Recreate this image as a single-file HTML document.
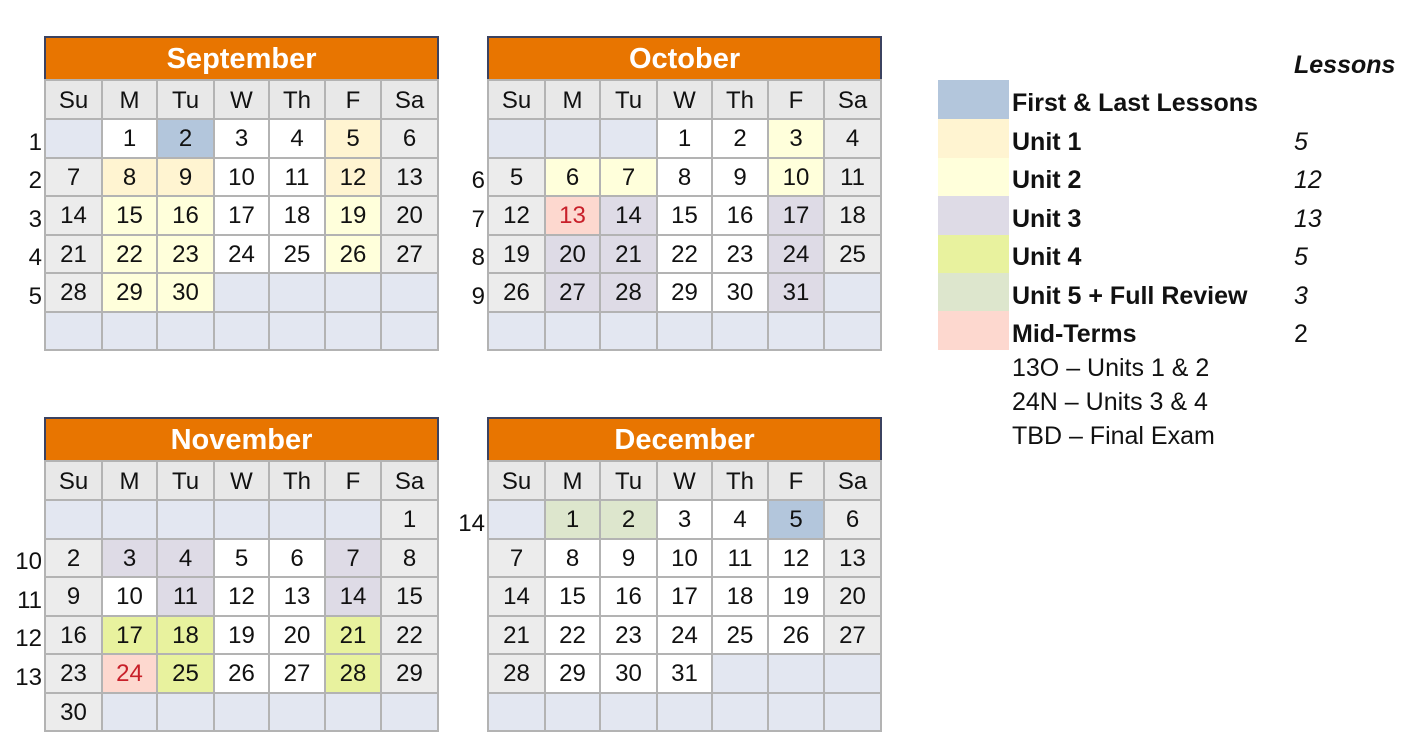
<!DOCTYPE html>
<html><head><meta charset="utf-8"><style>
body{margin:0;width:1422px;height:750px;background:#fff;position:relative;font-family:"Liberation Sans",sans-serif;color:#111;overflow:hidden}
table.cal{position:absolute;border-collapse:collapse;table-layout:fixed;width:393px;border-left:2px solid #3b4260;border-bottom:2px solid #3b4260}
table.cal td{border:2px solid #b3b3b3;text-align:center;font-size:24px;padding:2px 0 0 0;height:34.5px;line-height:24px}
table.cal tr.h td{background:#e87500;color:#fff;font-weight:bold;font-size:29px;height:40px;padding:1px 0 0 0;border:2px solid #3b4260;border-bottom-color:#b3b3b3}
table.cal tr.d td{background:#e8e8e8;height:35px}
td.e{background:#e3e7f1}td.w{background:#fff}td.g{background:#ececec}
td.f{background:#b3c6dc}td.a{background:#fff4d1}td.b{background:#ffffdb}td.c{background:#dedbe6}td.u4{background:#e8f29e}td.u5{background:#dde6cd}td.m{background:#fdd8cf;color:#c8202a}
.wk{position:absolute;font-size:24px;width:40px;text-align:right}
.sw{position:absolute;left:938px;width:71px;height:39px}
.lt{position:absolute;left:1012px;font-size:25px;font-weight:bold;line-height:28px}
.ln{position:absolute;left:1294px;font-size:25px;font-style:italic;line-height:28px}
.pl{position:absolute;left:1012px;font-size:25px;line-height:28px}
</style></head><body>

<table class="cal" style="left:44px;top:36px">
<colgroup><col style="width:57px"><col style="width:55px"><col style="width:57px"><col style="width:55px"><col style="width:56px"><col style="width:56px"><col style="width:57px"></colgroup>
<tr class="h"><td colspan="7">September</td></tr>
<tr class="d"><td>Su</td><td>M</td><td>Tu</td><td>W</td><td>Th</td><td>F</td><td>Sa</td></tr>
<tr><td class="e"></td><td class="w">1</td><td class="f">2</td><td class="w">3</td><td class="w">4</td><td class="a">5</td><td class="g">6</td></tr>
<tr><td class="g">7</td><td class="a">8</td><td class="a">9</td><td class="w">10</td><td class="w">11</td><td class="a">12</td><td class="g">13</td></tr>
<tr><td class="g">14</td><td class="b">15</td><td class="b">16</td><td class="w">17</td><td class="w">18</td><td class="b">19</td><td class="g">20</td></tr>
<tr><td class="g">21</td><td class="b">22</td><td class="b">23</td><td class="w">24</td><td class="w">25</td><td class="b">26</td><td class="g">27</td></tr>
<tr><td class="g">28</td><td class="b">29</td><td class="b">30</td><td class="e"></td><td class="e"></td><td class="e"></td><td class="e"></td></tr>
<tr><td class="e"></td><td class="e"></td><td class="e"></td><td class="e"></td><td class="e"></td><td class="e"></td><td class="e"></td></tr>
</table>

<table class="cal" style="left:487px;top:36px">
<colgroup><col style="width:57px"><col style="width:55px"><col style="width:57px"><col style="width:55px"><col style="width:56px"><col style="width:56px"><col style="width:57px"></colgroup>
<tr class="h"><td colspan="7">October</td></tr>
<tr class="d"><td>Su</td><td>M</td><td>Tu</td><td>W</td><td>Th</td><td>F</td><td>Sa</td></tr>
<tr><td class="e"></td><td class="e"></td><td class="e"></td><td class="w">1</td><td class="w">2</td><td class="b">3</td><td class="g">4</td></tr>
<tr><td class="g">5</td><td class="b">6</td><td class="b">7</td><td class="w">8</td><td class="w">9</td><td class="b">10</td><td class="g">11</td></tr>
<tr><td class="g">12</td><td class="m">13</td><td class="c">14</td><td class="w">15</td><td class="w">16</td><td class="c">17</td><td class="g">18</td></tr>
<tr><td class="g">19</td><td class="c">20</td><td class="c">21</td><td class="w">22</td><td class="w">23</td><td class="c">24</td><td class="g">25</td></tr>
<tr><td class="g">26</td><td class="c">27</td><td class="c">28</td><td class="w">29</td><td class="w">30</td><td class="c">31</td><td class="e"></td></tr>
<tr><td class="e"></td><td class="e"></td><td class="e"></td><td class="e"></td><td class="e"></td><td class="e"></td><td class="e"></td></tr>
</table>

<table class="cal" style="left:44px;top:417px">
<colgroup><col style="width:57px"><col style="width:55px"><col style="width:57px"><col style="width:55px"><col style="width:56px"><col style="width:56px"><col style="width:57px"></colgroup>
<tr class="h"><td colspan="7">November</td></tr>
<tr class="d"><td>Su</td><td>M</td><td>Tu</td><td>W</td><td>Th</td><td>F</td><td>Sa</td></tr>
<tr><td class="e"></td><td class="e"></td><td class="e"></td><td class="e"></td><td class="e"></td><td class="e"></td><td class="g">1</td></tr>
<tr><td class="g">2</td><td class="c">3</td><td class="c">4</td><td class="w">5</td><td class="w">6</td><td class="c">7</td><td class="g">8</td></tr>
<tr><td class="g">9</td><td class="w">10</td><td class="c">11</td><td class="w">12</td><td class="w">13</td><td class="c">14</td><td class="g">15</td></tr>
<tr><td class="g">16</td><td class="u4">17</td><td class="u4">18</td><td class="w">19</td><td class="w">20</td><td class="u4">21</td><td class="g">22</td></tr>
<tr><td class="g">23</td><td class="m">24</td><td class="u4">25</td><td class="w">26</td><td class="w">27</td><td class="u4">28</td><td class="g">29</td></tr>
<tr><td class="g">30</td><td class="e"></td><td class="e"></td><td class="e"></td><td class="e"></td><td class="e"></td><td class="e"></td></tr>
</table>

<table class="cal" style="left:487px;top:417px">
<colgroup><col style="width:57px"><col style="width:55px"><col style="width:57px"><col style="width:55px"><col style="width:56px"><col style="width:56px"><col style="width:57px"></colgroup>
<tr class="h"><td colspan="7">December</td></tr>
<tr class="d"><td>Su</td><td>M</td><td>Tu</td><td>W</td><td>Th</td><td>F</td><td>Sa</td></tr>
<tr><td class="e"></td><td class="u5">1</td><td class="u5">2</td><td class="w">3</td><td class="w">4</td><td class="f">5</td><td class="g">6</td></tr>
<tr><td class="g">7</td><td class="w">8</td><td class="w">9</td><td class="w">10</td><td class="w">11</td><td class="w">12</td><td class="g">13</td></tr>
<tr><td class="g">14</td><td class="w">15</td><td class="w">16</td><td class="w">17</td><td class="w">18</td><td class="w">19</td><td class="g">20</td></tr>
<tr><td class="g">21</td><td class="w">22</td><td class="w">23</td><td class="w">24</td><td class="w">25</td><td class="w">26</td><td class="g">27</td></tr>
<tr><td class="g">28</td><td class="w">29</td><td class="w">30</td><td class="w">31</td><td class="e"></td><td class="e"></td><td class="e"></td></tr>
<tr><td class="e"></td><td class="e"></td><td class="e"></td><td class="e"></td><td class="e"></td><td class="e"></td><td class="e"></td></tr>
</table>

<div class="wk" style="left:2px;top:129px">1</div>
<div class="wk" style="left:2px;top:167px">2</div>
<div class="wk" style="left:2px;top:206px">3</div>
<div class="wk" style="left:2px;top:244px">4</div>
<div class="wk" style="left:2px;top:283px">5</div>
<div class="wk" style="left:445px;top:167px">6</div>
<div class="wk" style="left:445px;top:206px">7</div>
<div class="wk" style="left:445px;top:244px">8</div>
<div class="wk" style="left:445px;top:283px">9</div>
<div class="wk" style="left:2px;top:548px">10</div>
<div class="wk" style="left:2px;top:587px">11</div>
<div class="wk" style="left:2px;top:625px">12</div>
<div class="wk" style="left:2px;top:664px">13</div>
<div class="wk" style="left:445px;top:510px">14</div>

<div class="ln" style="top:51px;font-weight:bold">Lessons</div>
<div class="sw" style="top:80px;background:#b3c6dc"></div>
<div class="sw" style="top:119px;background:#fff4d1"></div>
<div class="sw" style="top:158px;background:#ffffdb"></div>
<div class="sw" style="top:196px;background:#dedbe6"></div>
<div class="sw" style="top:235px;background:#e8f29e"></div>
<div class="sw" style="top:273px;background:#dde6cd"></div>
<div class="sw" style="top:311px;background:#fdd8cf"></div>
<div class="lt" style="top:89px">First &amp; Last Lessons</div>
<div class="lt" style="top:128px">Unit 1</div>
<div class="lt" style="top:166px">Unit 2</div>
<div class="lt" style="top:205px">Unit 3</div>
<div class="lt" style="top:243px">Unit 4</div>
<div class="lt" style="top:282px">Unit 5 + Full Review</div>
<div class="lt" style="top:320px">Mid-Terms</div>
<div class="ln" style="top:128px">5</div>
<div class="ln" style="top:166px">12</div>
<div class="ln" style="top:205px">13</div>
<div class="ln" style="top:243px">5</div>
<div class="ln" style="top:282px">3</div>
<div class="ln" style="top:320px;font-style:normal">2</div>
<div class="pl" style="top:354px">13O – Units 1 &amp; 2</div>
<div class="pl" style="top:388px">24N – Units 3 &amp; 4</div>
<div class="pl" style="top:422px">TBD – Final Exam</div>
</body></html>
